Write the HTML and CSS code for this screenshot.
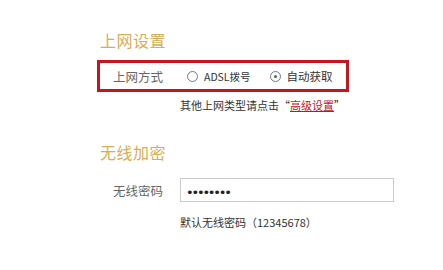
FILE: index.html
```html
<!DOCTYPE html>
<html lang="zh-CN">
<head>
    <meta charset="UTF-8">
    <title>上网设置</title>
    <link rel="stylesheet" href="styles.css">
</head>
<body>
<div class="page">
    <h2 class="section-title">上网设置</h2>
    <div class="mode-box">
        <span class="label">上网方式</span>
        <label class="radio"><span class="dot"></span><span class="small">ADSL拨号</span></label>
        <label class="radio checked"><span class="dot"></span>自动获取</label>
    </div>
    <p class="hint first">其他上网类型请点击“<a href="#" class="link">高级设置</a>”</p>

    <h2 class="section-title second">无线加密</h2>
    <div class="row">
        <span class="label">无线密码</span>
        <div class="input"><span class="dots">••••••••</span></div>
    </div>
    <p class="hint">默认无线密码（12345678）</p>
</div>
</body>
</html>
```

FILE: styles.css
```css
* {
    box-sizing: border-box;
}

body {
    margin: 0;
    background: #fff;
    font-family: "Noto Sans CJK SC", "DejaVu Sans", sans-serif;
    color: #555;
}

.page {
    padding: 30px 0 0 97px;
}

.section-title {
    margin: 0 0 0 3px;
    font-size: 16px;
    line-height: 20px;
    font-weight: normal;
    color: #d9ad55;
    letter-spacing: 0.5px;
}

.section-title.second {
    margin-top: 30px;
}

.mode-box {
    display: flex;
    align-items: center;
    width: 252px;
    height: 32px;
    margin-top: 10px;
    border: 3px solid #c4161c;
    padding-left: 13px;
}

.label {
    flex-shrink: 0;
    white-space: nowrap;
    font-size: 12.5px;
    color: #666;
    width: 74px;
}

.row .label {
    padding-left: 16px;
    width: 83px;
}

.radio {
    flex-shrink: 0;
    white-space: nowrap;
    display: flex;
    align-items: center;
    font-size: 11.5px;
    color: #333;
    margin-right: 19px;
}

.radio .small {
    font-size: 10.5px;
}

.dot {
    width: 11px;
    height: 11px;
    border: 1px solid #6b7b8c;
    border-radius: 50%;
    margin-right: 6px;
    display: flex;
    align-items: center;
    justify-content: center;
}

.radio.checked .dot::after {
    content: "";
    width: 3px;
    height: 3px;
    border-radius: 50%;
    background: #2e7d32;
}

.hint {
    margin: 0 0 0 83px;
    font-size: 11px;
    line-height: 14px;
    color: #333;
}

.hint.first {
    margin-top: 6px;
}

.link {
    color: #c4161c;
}

.row {
    display: flex;
    align-items: center;
    margin-top: 16px;
}

.input {
    width: 214px;
    height: 24px;
    border: 1px solid #ccc;
    padding-left: 5px;
    line-height: 22px;
    color: #222;
}

.dots {
    font-family: "DejaVu Sans", sans-serif;
    font-size: 13px;
    letter-spacing: -2.2px;
}

.row + .hint {
    margin-top: 13px;
}
```
